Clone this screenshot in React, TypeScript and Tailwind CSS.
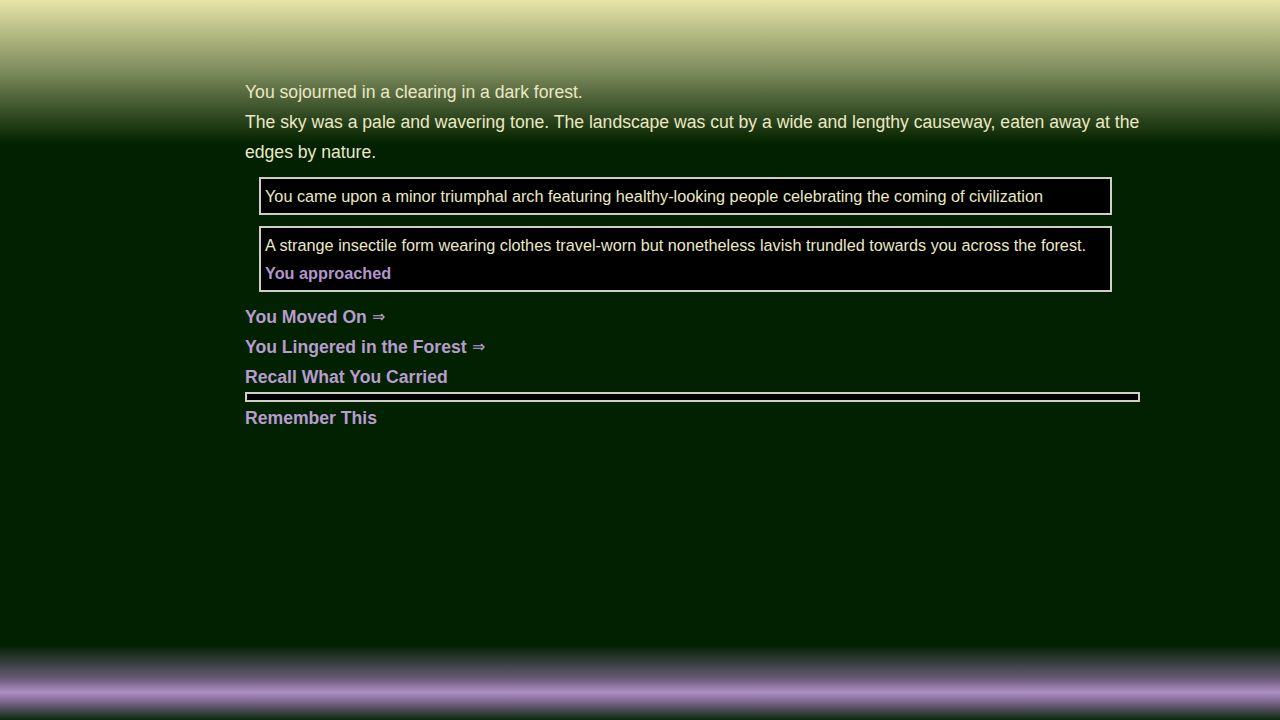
export default function App() {
  const links: [string, boolean][] = [
    ["You Moved On", true],
    ["You Lingered in the Forest", true],
    ["Recall What You Carried", false],
  ];
  return (
    <div
      className="relative w-full h-[720px] overflow-hidden"
      style={{ fontFamily: '"Liberation Sans", Arial, sans-serif' }}
    >
      {/* sky and ground backdrop */}
      <div className="absolute inset-0 bg-[#012100]" />
      <div className="absolute inset-x-0 top-0 h-[145px] bg-gradient-to-b from-[#e7e5a8] via-[#7c8a5c] to-[#012100]" />
      <div className="absolute inset-x-0 bottom-0 h-[75px] bg-[linear-gradient(to_bottom,#012100_0%,#6a5a78_45%,#ad8fc2_63%,#6a5a78_80%,#0a2a0a_100%)]" />

      <div className="relative ml-[245px] w-[895px] pt-[77px] text-[17.6px] leading-[30px] text-[#ebe8c4]">
        <p>You sojourned in a clearing in a dark forest.</p>
        <p>
          The sky was a pale and wavering tone. The landscape was cut by a wide and lengthy causeway, eaten away at the
          edges by nature.
        </p>

        <div className="ml-[14px] mr-[28px] mt-[10px] border-2 border-[#cfcfc8] bg-black px-[4px] py-[3px] text-[16.25px] leading-[28px]">
          You came upon a minor triumphal arch featuring healthy-looking people celebrating the coming of civilization
        </div>

        <div className="ml-[14px] mr-[28px] mt-[11px] border-2 border-[#cfcfc8] bg-black px-[4px] py-[3px] text-[16.25px] leading-[28px]">
          <div>A strange insectile form wearing clothes travel-worn but nonetheless lavish trundled towards you across the forest.</div>
          <div className="font-bold text-[#b295cc]">You approached</div>
        </div>

        <div className="mt-[10px] flex flex-col text-[17.6px] font-bold leading-[30px] text-[#b89ccf]">
          {links.map(([label, arrow]) => (
            <div key={label} className="flex h-[30px] items-center">
              <span>{label}</span>
              {arrow && <span className="ml-[5px] text-[16px] leading-none font-normal">⇒</span>}
            </div>
          ))}
        </div>

        <div className="h-[10px] border-2 border-[#cfcfc8] bg-black" />

        <div className="mt-[1px] text-[17.6px] font-bold leading-[30px] text-[#b89ccf]">Remember This</div>
      </div>
    </div>
  );
}
